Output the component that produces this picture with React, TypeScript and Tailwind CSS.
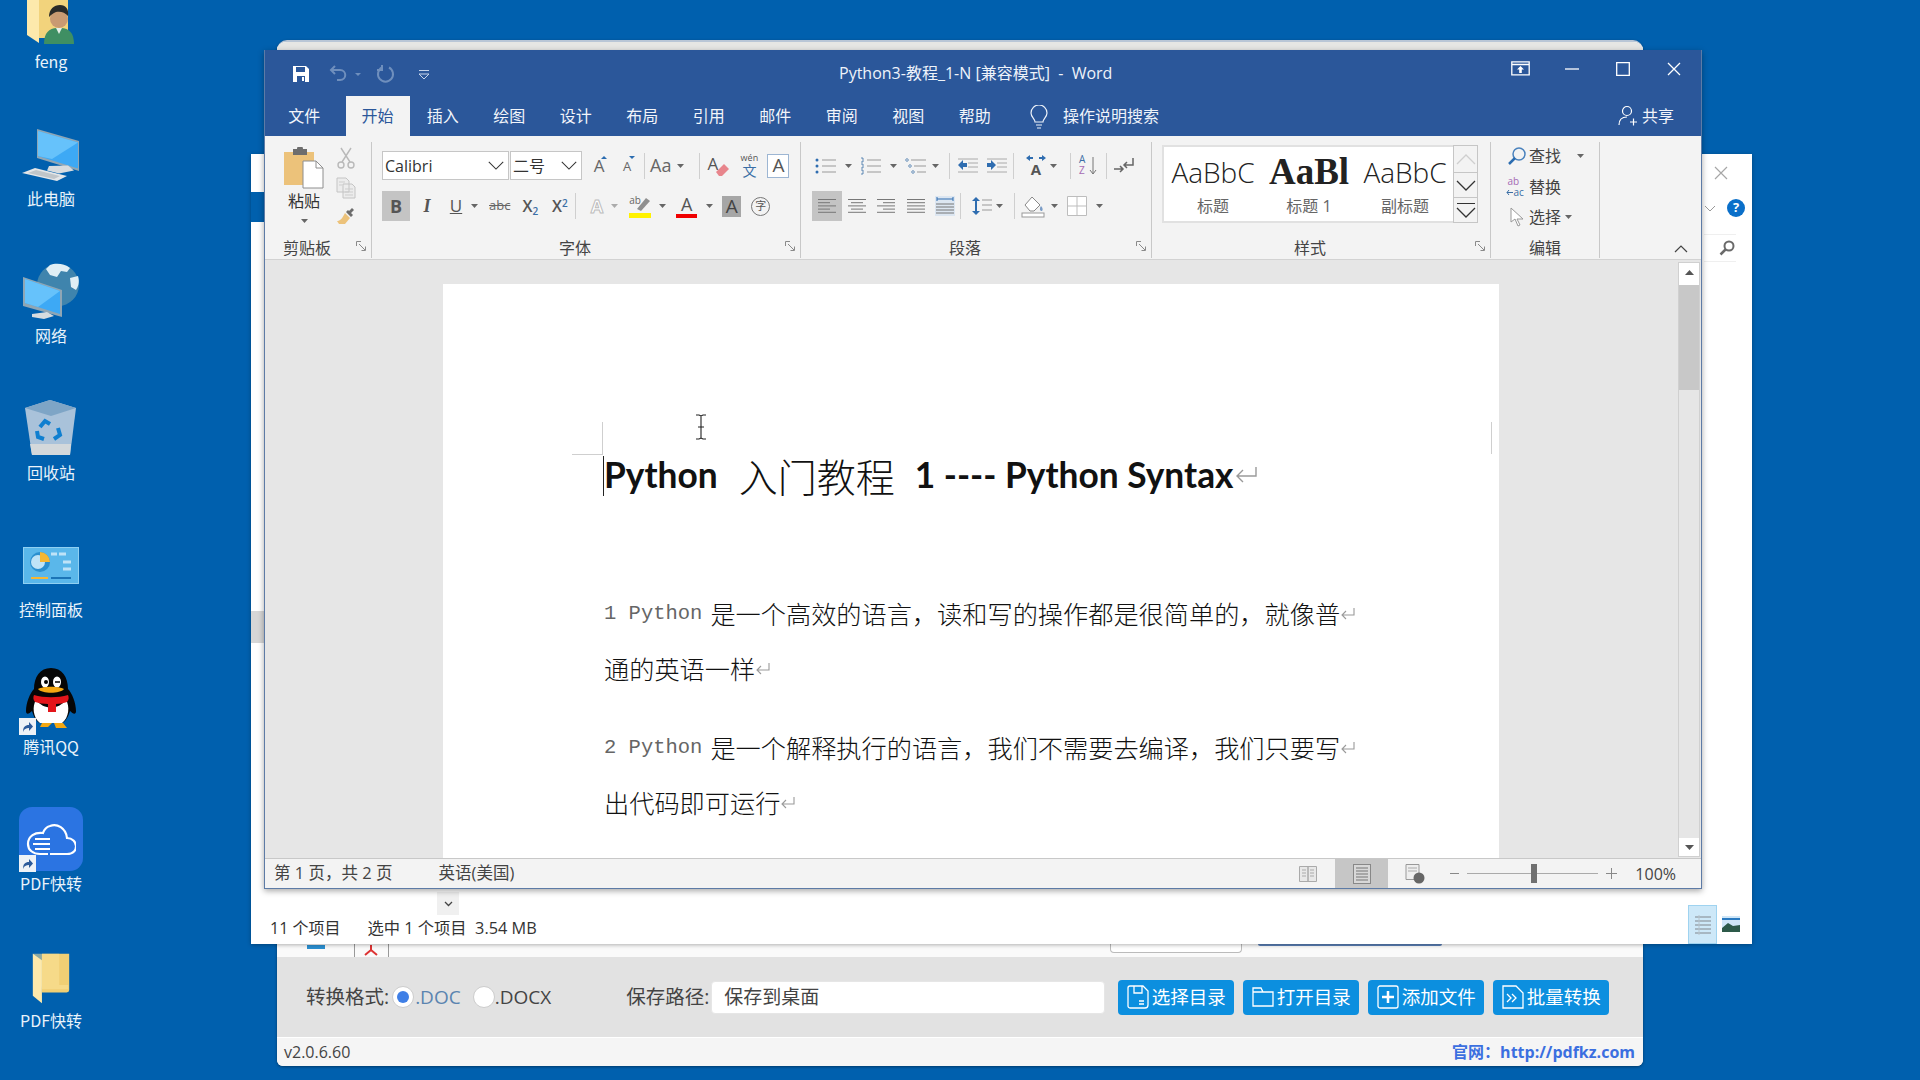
import type { ReactNode } from 'react'

// ─── Small shared pieces ──────────────────────────────────────────────────────

const Caret = ({ className = '' }: { className?: string }) => (
  <svg width="7" height="4" viewBox="0 0 7 4" className={`shrink-0 ${className}`}>
    <path d="M0 0h7L3.5 4z" fill="#666" />
  </svg>
)

const Launcher = () => (
  <svg width="11" height="11" viewBox="0 0 11 11" className="absolute right-[4px] top-[3px]">
    <path d="M.5 5V.5H5M3 3l6 6M9.5 5.5v4h-4" fill="none" stroke="#8a8a8a" />
  </svg>
)

const Chevron = ({ w = 20, h = 11 }: { w?: number; h?: number }) => (
  <svg width={w} height={h} viewBox="0 0 20 11">
    <path d="M1 1l9 9 9-9" fill="none" stroke="#333" strokeWidth="1.3" />
  </svg>
)

const Mark = ({ className = '' }: { className?: string }) => (
  <svg width="24" height="20" viewBox="0 0 24 20" className={`inline-block ${className}`}>
    <path d="M22 2v9H3M9 5l-6 6 6 6" fill="none" stroke="#9a9a9a" strokeWidth="1.4" />
  </svg>
)

const SmallMark = () => (
  <svg width="16" height="15" viewBox="0 0 16 15" className="inline-block">
    <path d="M14 2v7H2M6 5L2 9l4 4" fill="none" stroke="#9a9a9a" strokeWidth="1.1" />
  </svg>
)

const Lines = ({ kind }: { kind: 'left' | 'center' | 'right' | 'justify' }) => {
  const rows = [
    [1, 19],
    [kind === 'justify' ? 1 : kind === 'left' ? 1 : kind === 'center' ? 4 : 7, kind === 'justify' ? 19 : kind === 'left' ? 13 : kind === 'center' ? 16 : 19],
    [1, 19],
    [kind === 'justify' ? 1 : kind === 'left' ? 1 : kind === 'center' ? 4 : 7, kind === 'justify' ? 19 : kind === 'left' ? 13 : kind === 'center' ? 16 : 19],
    [1, 19],
  ]
  return (
    <svg width="20" height="18" viewBox="0 0 20 18">
      {rows.map(([a, b], i) => (
        <path key={i} d={`M${a} ${2.5 + i * 3.2}H${b}`} stroke="#777" strokeWidth="1" />
      ))}
    </svg>
  )
}

const Sep = ({ className = '' }: { className?: string }) => (
  <div className={`h-[26px] w-px shrink-0 bg-[#cfcfcf] ${className}`} />
)

// ─── Desktop icons ────────────────────────────────────────────────────────────

const Shortcut = () => (
  <div className="absolute bottom-[-1px] left-[1px] flex h-[17px] w-[17px] items-center justify-center bg-[#eef2f7]">
    <svg width="13" height="13" viewBox="0 0 13 13">
      <path d="M2 12c0-5 2-7 6-7V2l4 4.500L8 11V8C5 8 3 9 2 12z" fill="#2c5a9a" />
    </svg>
  </div>
)

const FolderIcon = () => (
  <svg width="38" height="55" viewBox="0 0 46 62">
    <path d="M12 1h33v44a3 3 0 01-3 3H12z" fill="#f0cf74" />
    <path d="M1 1h32v38h11v5H12z" fill="#fbe39a" opacity=".55" />
    <path d="M1 1l11 8v52L1 52z" fill="#fde9ac" />
  </svg>
)

const FengIcon = () => (
  <div className="relative h-[48px] w-[48px]">
    <svg width="50" height="48" viewBox="0 0 50 48" className="absolute left-[0px] top-0">
      <path d="M8 0h33v40H8z" fill="#f2d37c" />
      <path d="M0 0l12 0v45L0 37z" fill="#fde9ac" />
      <path d="M17 46c0-11 5-16 13-16h4c8 0 13 5 13 16z" fill="#3f8f63" />
      <path d="M29 30l3 6 3-6z" fill="#e6efe8" />
      <circle cx="32" cy="21" r="9" fill="#c99a72" />
      <path d="M22 19c0-8 5-12 11-12s9 4 8 11c-3-4-8-5-12-4-3 1-5 3-7 5z" fill="#2a2a28" />
    </svg>
  </div>
)

const PcIcon = () => (
  <svg width="58" height="52" viewBox="0 0 58 52">
    <path d="M15 0l42 12v30L15 29z" fill="#8fa6b5" />
    <path d="M16 2l40 11.500v26L16 27z" fill="#3da9f5" />
    <path d="M16 2l40 11.500L30 30 16 27z" fill="#66c2fb" />
    <path d="M27 37l19-.5 6 5-15 3-12-3z" fill="#d7dcdf" />
    <path d="M0 44l13-5 32 8-10 5z" fill="#e3e6e8" />
    <path d="M6 44l8-3 24 6-6 3z" fill="#bfc5c9" />
  </svg>
)

const NetIcon = () => (
  <svg width="58" height="56" viewBox="0 0 58 56">
    <circle cx="36" cy="22" r="21" fill="#3f84ad" />
    <path d="M28 2c5-2 14-2 20 3l-3 4-6-1-4 6-7-2-4-6zM48 15l8-2c2 6 0 11-2 14l-5-3z" fill="#dfeef5" />
    <path d="M1 14l39 13v27L1 43z" fill="#8fa6b5" />
    <path d="M3 16l35 12v23L3 40z" fill="#3da9f5" />
    <path d="M3 16l35 12-22 16L3 40z" fill="#66c2fb" />
    <path d="M10 51l15-2 7 4-10 3-12-2z" fill="#d7dcdf" />
  </svg>
)

const BinIcon = () => (
  <svg width="52" height="56" viewBox="0 0 52 56">
    <path d="M0 8l25-8 26 8-6 47H7z" fill="#a9c2da" />
    <path d="M0 8l25-8 26 8-25 8z" fill="#7ea5c6" />
    <path d="M5 44h41l-1 11H7z" fill="#d3d8db" />
    <path d="M15 27l5-6 5 3M33 28l2 7-6 4M19 39l-6-2-1-6" fill="none" stroke="#0f7fd0" strokeWidth="4" />
  </svg>
)

const PanelIcon = () => (
  <svg width="56" height="37" viewBox="0 0 56 37">
    <rect width="56" height="37" fill="#5ab7ea" />
    <rect x=".5" y=".5" width="55" height="36" fill="none" stroke="#8fd0f2" />
    <circle cx="17" cy="15" r="10" fill="#2b8fcf" />
    <circle cx="15" cy="15" r="7" fill="#bfe3f7" />
    <path d="M17 15V5a10 10 0 0110 10z" fill="#f7b733" />
    <path d="M28 7h6M36 7h7M40 15h8M40 22h8" stroke="#bfe3f7" strokeWidth="3" />
    <path d="M8 31h17" stroke="#f7b733" strokeWidth="2" />
    <path d="M28 31h20" stroke="#1b74b6" strokeWidth="2" />
  </svg>
)

const QqIcon = () => (
  <svg width="54" height="62" viewBox="0 0 54 62">
    <path d="M27 0c11 0 17 9 17 21 4 4 8 14 8 22 0 4-3 3-6 0-2 6-4 10-8 12H16c-4-2-6-6-8-12-3 3-6 4-6 0 0-8 4-18 8-22C10 9 16 0 27 0z" fill="#060606" />
    <path d="M12 32c8 10 22 10 30 0 4 6 3 18-4 23H16c-7-5-8-17-4-23z" fill="#fff" />
    <path d="M10 27c10 3 24 3 34 0 1 2 1 5-1 7-3 1-8 2-11 2v8h-8v-8c-5 0-9-1-13-2-2-2-2-5-1-7z" fill="#e3151a" />
    <ellipse cx="21" cy="14" rx="4" ry="5.500" fill="#fff" />
    <ellipse cx="33" cy="14" rx="4" ry="5.500" fill="#fff" />
    <circle cx="22" cy="14" r="2" fill="#000" />
    <path d="M31 14h5" stroke="#000" strokeWidth="1.500" />
    <path d="M14 21c5-3 21-3 26 0-4 5-22 5-26 0z" fill="#f3a712" />
    <path d="M18 55h10l-4 4h-8zM30 55h9l4 5H32z" fill="#f3a712" />
  </svg>
)

const PdfIcon = () => (
  <div className="flex h-[64px] w-[64px] items-center justify-center rounded-[13px] bg-[#2b74e2]">
    <svg width="50" height="34" viewBox="0 0 50 34" className="mt-[1px]">
      <path d="M24 31h17c13 0 11-16 0-16C40 5 31 0 24 3c-4 1-6 4-7 7-8-1-15 3-15 11 0 6 5 10 12 10h8" fill="none" stroke="#fff" strokeWidth="2.200" />
      <path d="M9 16h15M7 21h17M9 26h15" stroke="#fff" strokeWidth="2" />
    </svg>
  </div>
)

const DesktopIcon = ({ label, icon, lift = '', shortcut = false }: { label: string; icon: ReactNode; lift?: string; shortcut?: boolean }) => (
  <div className="flex h-[137px] w-[102px] flex-col items-center justify-end pb-[8px]">
    <div className="relative flex w-[66px] justify-center">
      <div className={lift}>{icon}</div>
      {shortcut && <Shortcut />}
    </div>
    <div className="mt-[1px] text-[16px] leading-[22px] text-[#e9f3fb] [font-family:'Noto_Sans_CJK_SC',sans-serif]">{label}</div>
  </div>
)

// ─── Word ─────────────────────────────────────────────────────────────────────

const tabs = ['文件', '开始', '插入', '绘图', '设计', '布局', '引用', '邮件', '审阅', '视图', '帮助']

const TitleBar = () => (
  <div className="relative h-[46px] shrink-0">
    <div className="absolute left-[27px] top-[14px] flex items-center">
      <svg width="18" height="18" viewBox="0 0 18 18">
        <path d="M1 1h13l3 3v13H1z" fill="#fff" />
        <path d="M4 2h9v5H4z" fill="#2b579a" />
        <path d="M5 11h8v6H5z" fill="#2b579a" />
        <path d="M10 12h2v4h-2z" fill="#fff" />
      </svg>
      <svg width="20" height="18" viewBox="0 0 20 18" className="ml-[19px]">
        <path d="M6 1L2 5l4 4M2 5h9c7 0 7 10 0 10H8" fill="none" stroke="#6f8fbd" strokeWidth="2" />
      </svg>
      <svg width="6" height="3" viewBox="0 0 6 3" className="ml-[6px]">
        <path d="M0 0h6L3 3z" fill="#6f8fbd" />
      </svg>
      <svg width="20" height="20" viewBox="0 0 20 20" className="ml-[14px]">
        <path d="M7 3.500a7.500 7.500 0 107 0M7 1v5H2" fill="none" stroke="#6f8fbd" strokeWidth="2" />
      </svg>
      <svg width="12" height="11" viewBox="0 0 12 11" className="ml-[23px]">
        <path d="M1 1.500h10" stroke="#c6d4ea" />
        <path d="M1 5h10L6 10z" fill="none" stroke="#c6d4ea" />
      </svg>
    </div>
    <div className="absolute left-[574px] top-[11px] whitespace-pre text-[16px] leading-[24px] text-[#eef3fa]">Python3-教程_1-N [兼容模式]  -  Word</div>
    <div className="absolute left-[1246px] top-[11px] flex items-center">
      <svg width="19" height="15" viewBox="0 0 19 15">
        <path d="M.8.800h17.400v13H.8zM.8 3.500h17.400" fill="none" stroke="#fff" strokeWidth="1.300" />
        <path d="M9.500 5L6 8.500h2.200V12h2.600V8.500H13z" fill="#fff" />
      </svg>
      <svg width="14" height="2" viewBox="0 0 14 2" className="ml-[35px]">
        <path d="M0 1h14" stroke="#fff" strokeWidth="1.300" />
      </svg>
      <svg width="14" height="14" viewBox="0 0 14 14" className="ml-[37px]">
        <path d="M.7.700h12.600v12.600H.7z" fill="none" stroke="#fff" strokeWidth="1.300" />
      </svg>
      <svg width="14" height="14" viewBox="0 0 14 14" className="ml-[37px]">
        <path d="M1 1l12 12M13 1L1 13" stroke="#fff" strokeWidth="1.300" />
      </svg>
    </div>
  </div>
)

const TabRow = () => (
  <div className="relative flex h-[40px] shrink-0 items-end pl-[6px]">
    {tabs.map((t) => (
      <div
        key={t}
        className={
          t === '开始'
            ? 'ml-[8px] flex h-[40px] w-[64px] items-center justify-center bg-[#f3f3f3] text-[16px] text-[#2b579a]'
            : 'flex h-[40px] w-[66.500px] items-center justify-center text-[16px] text-[#f2f5fa]'
        }
      >
        {t}
      </div>
    ))}
    <svg width="18" height="24" viewBox="0 0 18 24" className="mb-[7px] ml-[22px]">
      <path d="M5 17c0-3-4-5-4-9a8 8 0 0116 0c0 4-4 6-4 9zM6 20h6M7 23h4" fill="none" stroke="#eef3fa" strokeWidth="1.200" />
    </svg>
    <div className="ml-[15px] flex h-[40px] items-center text-[16px] text-[#eef3fa]">操作说明搜索</div>
    <div className="absolute right-[27px] top-0 flex h-[40px] items-center">
      <svg width="20" height="22" viewBox="0 0 20 22">
        <circle cx="9" cy="6" r="4.500" fill="none" stroke="#fff" strokeWidth="1.200" />
        <path d="M1 20c0-5 3-8 8-8M12 17h7M15.500 13.500v7" fill="none" stroke="#fff" strokeWidth="1.200" />
      </svg>
      <span className="ml-[4px] text-[16px] text-[#f2f5fa]">共享</span>
    </div>
  </div>
)

const Group = ({ label, className, launcher = true, children }: { label: string; className: string; launcher?: boolean; children: ReactNode }) => (
  <div className={`flex h-full shrink-0 flex-col border-r border-[#c8c8c8] ${className}`}>
    <div className="min-h-0 flex-1">{children}</div>
    <div className={launcher ? 'relative h-[20px] pr-[22px] text-center text-[16px] leading-[20px] text-[#444]' : 'relative h-[20px] text-center text-[16px] leading-[20px] text-[#444]'}>
      {label}
      {launcher && <Launcher />}
    </div>
  </div>
)

const ClipboardGroup = () => (
  <Group label="剪贴板" className="w-[107px]">
    <div className="flex pt-[5px]">
      <div className="ml-[19px] flex w-[40px] flex-col items-center">
        <svg width="40" height="42" viewBox="0 0 40 42">
          <path d="M0 5h30v33H0z" fill="#ecc27a" />
          <path d="M9 2h4a3 3 0 016 0h4v6H9z" fill="#6d6d6d" />
          <path d="M19 14h13l7 7v20H19z" fill="#fff" stroke="#8e8e8e" />
          <path d="M32 14v7h7" fill="none" stroke="#8e8e8e" />
        </svg>
        <div className="text-[16px] leading-[24px] text-[#333]">粘贴</div>
        <Caret className="mt-[6px]" />
      </div>
      <div className="ml-[12px] flex flex-col items-center">
        <svg width="18" height="22" viewBox="0 0 18 22">
          <path d="M4 1l9 14M14 1L5 15" stroke="#b9b9b9" strokeWidth="1.400" />
          <circle cx="4" cy="18" r="3" fill="none" stroke="#b9b9b9" strokeWidth="1.400" />
          <circle cx="14" cy="18" r="3" fill="none" stroke="#b9b9b9" strokeWidth="1.400" />
        </svg>
        <svg width="20" height="22" viewBox="0 0 20 22" className="mt-[8px]">
          <path d="M1 1h9l3 3v11H1zM7 7h9l3 3v11H7z" fill="#ececec" stroke="#c4c4c4" />
          <path d="M3 5h6M3 8h3M9 12h8M9 15h8M9 18h8" stroke="#cdcdcd" />
        </svg>
        <svg width="18" height="16" viewBox="0 0 18 16" className="mt-[9px]">
          <path d="M8 5l5 5-5 6H2L0 13c3 0 5-2 8-8z" fill="#ecc27a" />
          <path d="M9 4l5 5 2-2-2-2 3-3-2-2-3 3-1-1z" fill="#6d6d6d" />
        </svg>
      </div>
    </div>
  </Group>
)

const Combo = ({ text, className }: { text: string; className: string }) => (
  <div className={`flex h-[29px] items-center justify-between border border-[#c6c6c6] bg-white pl-[2px] pr-[4px] text-[16px] text-[#333] ${className}`}>
    <span>{text}</span>
    <Chevron w={16} h={9} />
  </div>
)

const GrowShrink = ({ size, up }: { size: string; up: boolean }) => (
  <div className={`relative flex w-[28px] justify-center text-[#666] ${size}`}>
    A
    <svg width="6" height="3" viewBox="0 0 6 3" className="absolute right-[6px] top-[4px]">
      <path d={up ? 'M0 3h6L3 0z' : 'M0 0h6L3 3z'} fill="#2b6cb0" />
    </svg>
  </div>
)

const FontGroup = () => (
  <Group label="字体" className="w-[429px]">
    <div className="flex flex-col gap-[11px] pl-[10px] pt-[9px]">
      <div className="flex h-[29px] items-center">
        <Combo text="Calibri" className="w-[127px]" />
        <Combo text="二号" className="ml-[1px] w-[72px]" />
        <div className="ml-[3px] flex items-center leading-[28px]">
          <GrowShrink size="text-[17px]" up />
          <GrowShrink size="text-[13px]" up={false} />
        </div>
        <Sep className="ml-[3px]" />
        <span className="ml-[5px] text-[18px] text-[#666]">Aa</span>
        <Caret className="ml-[6px]" />
        <Sep className="ml-[15px]" />
        <div className="relative ml-[7px] h-[24px] w-[22px] text-[17px] leading-[20px] text-[#555]">
          A
          <svg width="14" height="13" viewBox="0 0 14 13" className="absolute bottom-[2px] right-0">
            <path d="M1 9l8-8 5 5-7 7H4z" fill="#e8858c" />
          </svg>
        </div>
        <div className="ml-[8px] flex w-[24px] flex-col items-center text-[#555]">
          <span className="text-[9px] leading-[10px]">wén</span>
          <span className="text-[14px] leading-[15px] text-[#3a6ea5] [font-family:'Noto_Sans_CJK_SC',sans-serif]">文</span>
        </div>
        <div className="ml-[6px] flex h-[24px] w-[22px] items-center justify-center border border-[#9db6d3] bg-white text-[19px] text-[#555]">A</div>
      </div>
      <div className="flex h-[30px] items-center">
        <div className="flex h-[30px] w-[28px] items-center justify-center bg-[#c4c4c4] text-[18px] font-bold text-[#555]">B</div>
        <div className="ml-[2px] flex w-[30px] justify-center text-[18px] font-bold italic text-[#555] [font-family:'Liberation_Serif',serif]">I</div>
        <div className="flex w-[28px] justify-center text-[17px] text-[#555] underline">U</div>
        <Caret className="ml-[1px]" />
        <span className="ml-[11px] text-[13px] text-[#666] line-through">abc</span>
        <span className="ml-[12px] text-[16px] font-semibold text-[#555]">X<sub className="text-[10px] text-[#3a6ea5]">2</sub></span>
        <span className="ml-[14px] text-[16px] font-semibold text-[#555]">X<sup className="text-[10px] text-[#3a6ea5]">2</sup></span>
        <Sep className="ml-[7px]" />
        <span className="ml-[15px] text-[18px] font-bold text-white [-webkit-text-stroke:1px_#bdbdbd]">A</span>
        <Caret className="ml-[8px] opacity-50" />
        <div className="relative ml-[11px] h-[24px] w-[22px] text-[10px] leading-[12px] text-[#666]">
          ab
          <svg width="22" height="24" viewBox="0 0 22 24" className="absolute left-0 top-0">
            <path d="M8 15l9-11 4 3-9 10z" fill="#8f8f8f" />
            <rect y="19" width="22" height="5" fill="#fff200" />
          </svg>
        </div>
        <Caret className="ml-[8px]" />
        <div className="ml-[10px] flex w-[21px] flex-col items-center">
          <span className="text-[18px] leading-[20px] text-[#555]">A</span>
          <div className="h-[4px] w-[21px] bg-[#f00000]" />
        </div>
        <Caret className="ml-[9px]" />
        <div className="ml-[9px] flex h-[21px] w-[19px] items-center justify-center bg-[#a6a6a6] text-[19px] text-[#444]">A</div>
        <div className="ml-[10px] flex h-[19px] w-[19px] items-center justify-center rounded-full border border-[#777] text-[11px] text-[#555]">字</div>
      </div>
    </div>
  </Group>
)

const ListIcon = ({ n }: { n: 'bullet' | 'num' | 'multi' }) => (
  <svg width="22" height="18" viewBox="0 0 22 18">
    {[3, 9, 15].map((y, i) => (
      <g key={y}>
        {n === 'bullet' && <circle cx="2" cy={y} r="1.500" fill="#2f6db0" />}
        {n === 'num' && <path d={`M1 ${y - 2}h2v4H1`} fill="none" stroke="#3a6ea5" strokeWidth=".8" />}
        {n === 'multi' && <circle cx={2 + i * 3} cy={y} r="1.300" fill="none" stroke="#3a6ea5" strokeWidth=".7" />}
        <path d={`M${n === 'multi' ? 6 + i * 3 : 7} ${y}H21`} stroke="#999" />
      </g>
    ))}
  </svg>
)

const IndentIcon = ({ dir }: { dir: 'in' | 'out' }) => (
  <svg width="20" height="16" viewBox="0 0 20 16">
    <path d="M0 1h20M10 5h10M10 9h10M0 14h20" stroke="#aaa" />
    <path d={dir === 'out' ? 'M0 7l5-5v3h4v4H5v3z' : 'M9 7L4 2v3H0v4h4v3z'} fill="#2f6db0" />
  </svg>
)

const ParagraphGroup = () => (
  <Group label="段落" className="w-[351px]">
    <div className="flex flex-col gap-[11px] pl-[14px] pt-[9px]">
      <div className="flex h-[29px] items-center">
        <ListIcon n="bullet" />
        <Caret className="ml-[8px]" />
        <div className="ml-[8px]"><ListIcon n="num" /></div>
        <Caret className="ml-[8px]" />
        <div className="ml-[8px]"><ListIcon n="multi" /></div>
        <Caret className="ml-[5px]" />
        <Sep className="ml-[10px]" />
        <div className="ml-[8px]"><IndentIcon dir="out" /></div>
        <div className="ml-[9px]"><IndentIcon dir="in" /></div>
        <Sep className="ml-[6px]" />
        <div className="relative ml-[11px] flex h-[24px] w-[22px] items-end justify-center text-[15px] font-bold leading-[17px] text-[#555]">
          A
          <svg width="22" height="8" viewBox="0 0 22 8" className="absolute left-0 top-0">
            <path d="M1 4l4-3v2h3v2H5v2zM21 4l-4-3v2h-3v2h3v2z" fill="#2f6db0" />
          </svg>
        </div>
        <Caret className="ml-[3px]" />
        <Sep className="ml-[13px]" />
        <div className="relative ml-[8px] flex h-[24px] w-[18px] flex-col text-[10px] leading-[11px]">
          <span className="text-[#3a6ea5]">A</span>
          <span className="text-[#a56bb3]">Z</span>
          <svg width="8" height="20" viewBox="0 0 8 20" className="absolute right-0 top-[2px]">
            <path d="M4 1v17M1 14l3 4 3-4" fill="none" stroke="#777" />
          </svg>
        </div>
        <Sep className="ml-[9px]" />
        <svg width="22" height="18" viewBox="0 0 22 18" className="ml-[6px]">
          <path d="M20 1v7h-9M14 5l-3 3 3 3" fill="none" stroke="#666" strokeWidth="1.500" />
          <path d="M1 12h9M7 9l3 3-3 3" fill="none" stroke="#666" strokeWidth="1.500" />
        </svg>
      </div>
      <div className="-ml-[3px] flex h-[30px] items-center">
        <div className="flex h-[30px] w-[30px] items-center justify-center bg-[#c4c4c4]"><Lines kind="left" /></div>
        <div className="ml-[5px]"><Lines kind="center" /></div>
        <div className="ml-[9px]"><Lines kind="right" /></div>
        <div className="ml-[10px]"><Lines kind="justify" /></div>
        <svg width="20" height="20" viewBox="0 0 20 20" className="ml-[9px]">
          <rect width="20" height="20" fill="#dce6f1" />
          <path d="M2 3h16M2 1v4M18 1v4" stroke="#2f6db0" />
          <path d="M1 8h18M1 11h18M1 14h18M1 17h18" stroke="#777" />
        </svg>
        <Sep className="ml-[5px]" />
        <svg width="20" height="20" viewBox="0 0 20 20" className="ml-[11px]">
          <path d="M4 1L0 5h3v10H0l4 4 4-4H5V5h3z" fill="#2f6db0" />
          <path d="M10 4h10M10 9h10M10 14h10" stroke="#999" />
        </svg>
        <Caret className="ml-[4px]" />
        <Sep className="ml-[11px]" />
        <svg width="24" height="24" viewBox="0 0 24 24" className="ml-[6px]">
          <path d="M4 11l7-8 8 8-6 6H9z" fill="#fff" stroke="#888" />
          <path d="M20 12c2 2 2 4 1 5-2 0-3-2-1-5z" fill="#7a9cc6" />
          <rect x="1" y="19" width="22" height="4" fill="#fff" stroke="#999" />
        </svg>
        <Caret className="ml-[6px]" />
        <svg width="20" height="20" viewBox="0 0 20 20" className="ml-[9px]">
          <path d="M.5.500h19v19H.5zM10 .5v19M.5 10h19" fill="#fff" stroke="#bdbdbd" />
        </svg>
        <Caret className="ml-[9px]" />
      </div>
    </div>
  </Group>
)

const StyleItem = ({ sample, name, className }: { sample: string; name: string; className: string }) => (
  <div className="flex w-[96px] flex-col items-center overflow-hidden">
    <div className={`h-[40px] whitespace-nowrap leading-[40px] text-[#222] ${className}`}>{sample}</div>
    <div className="mt-[4px] text-[16px] leading-[20px] text-[#666]">{name}</div>
  </div>
)

const StylesGroup = () => (
  <Group label="样式" className="w-[339px]">
    <div className="ml-[10px] mt-[3px] flex h-[78px] w-[316px]">
      <div className="flex flex-1 items-start border-2 border-r-0 border-[#e1e1e1] bg-white pl-[1px] pt-[5px]">
        <StyleItem sample="AaBbC" name="标题" className="text-[28px] font-light" />
        <StyleItem sample="AaBl" name="标题 1" className="text-[37px] font-bold [font-family:'Liberation_Serif',serif]" />
        <StyleItem sample="AaBbC" name="副标题" className="text-[28px] font-light" />
      </div>
      <div className="flex w-[26px] flex-col">
        <div className="flex h-[28px] items-center justify-center border border-[#c6c6c6]">
          <svg width="20" height="11" viewBox="0 0 20 11"><path d="M1 10l9-9 9 9" fill="none" stroke="#cfcfcf" strokeWidth="1.300" /></svg>
        </div>
        <div className="flex h-[25px] items-center justify-center border border-t-0 border-[#c6c6c6]"><Chevron /></div>
        <div className="flex h-[25px] flex-col items-center justify-center gap-[3px] border border-t-0 border-[#c6c6c6]">
          <div className="h-px w-[18px] bg-[#333]" />
          <Chevron />
        </div>
      </div>
    </div>
  </Group>
)

const EditRow = ({ icon, text, caret, gap }: { icon: ReactNode; text: string; caret?: boolean; gap: string }) => (
  <div className="flex h-[30.500px] items-center text-[16px] text-[#444]">
    <div className="flex w-[23px] justify-center">{icon}</div>
    <span className="ml-[1px]">{text}</span>
    {caret && <Caret className={gap} />}
  </div>
)

const EditGroup = () => (
  <Group label="编辑" className="w-[109px]" launcher={false}>
    <div className="-mt-[1px] flex flex-col pl-[14px]">
      <EditRow
        text="查找"
        caret
        gap="ml-[16px]"
        icon={
          <svg width="20" height="20" viewBox="0 0 20 20">
            <circle cx="12" cy="8" r="6" fill="none" stroke="#4a82bd" strokeWidth="1.500" />
            <path d="M8 12l-6 6" stroke="#2b6cb0" strokeWidth="2.500" />
          </svg>
        }
      />
      <EditRow
        text="替换"
        gap=""
        icon={
          <div className="relative h-[22px] w-[22px] text-[10px] leading-[11px]">
            <div className="pl-[2px] text-[#a56bb3]">ab</div>
            <div className="pl-[8px] text-[#3a6ea5]">ac</div>
            <svg width="7" height="7" viewBox="0 0 7 7" className="absolute bottom-[2px] left-0">
              <path d="M1 3.500h6M3 1L1 3.500 3 6" fill="none" stroke="#3a6ea5" />
            </svg>
          </div>
        }
      />
      <EditRow
        text="选择"
        caret
        gap="ml-[4px]"
        icon={
          <svg width="14" height="20" viewBox="0 0 14 20">
            <path d="M1 1v14l4-3 3 7 2-1-3-6h6z" fill="#fff" stroke="#999" />
          </svg>
        }
      />
    </div>
  </Group>
)

const Ribbon = () => (
  <div className="relative flex h-[124px] shrink-0 border-b border-[#d2d2d2] bg-[#f3f3f3] pb-[1px] pt-[6px]">
    <ClipboardGroup />
    <FontGroup />
    <ParagraphGroup />
    <StylesGroup />
    <EditGroup />
    <svg width="14" height="8" viewBox="0 0 14 8" className="absolute bottom-[6px] right-[13px]">
      <path d="M1 7l6-6 6 6" fill="none" stroke="#444" strokeWidth="1.200" />
    </svg>
  </div>
)

const Page = () => (
  <div className="relative ml-[178px] mt-[24px] h-[700px] w-[1056px] shrink-0 bg-white pl-[161px] pt-[166px] text-[#111]">
    {/* margin corners and mouse cursor sit over the page */}
    <div className="absolute left-[159px] top-[138px] h-[33px] w-px bg-[#cfcfcf]" />
    <div className="absolute left-[129px] top-[170px] h-px w-[30px] bg-[#cfcfcf]" />
    <div className="absolute left-[1048px] top-[138px] h-[32px] w-px bg-[#cfcfcf]" />
    <div className="absolute left-[160px] top-[172px] h-[40px] w-px bg-[#222]" />
    <svg width="14" height="26" viewBox="0 0 14 26" className="absolute left-[251px] top-[130px]">
      <path d="M2 1h3l2 1 2-1h3M7 2v22M2 25h3l2-1 2 1h3M4 13h6" fill="none" stroke="#222" strokeWidth="1.100" />
    </svg>

    <div className="flex h-[50px] items-center whitespace-pre">
      <span className="text-[35.300px] font-bold [font-family:Lato,'Noto_Sans_CJK_SC',sans-serif]">Python</span>
      <span className="ml-[21px] text-[39px] font-light [font-family:'Noto_Sans_CJK_SC',sans-serif]">入门教程</span>
      <span className="ml-[20px] text-[35.300px] font-bold [font-family:Lato,'Noto_Sans_CJK_SC',sans-serif]">1 ---- Python Syntax</span>
      <Mark />
    </div>

    <div className="mt-[86px] text-[25.200px] font-light leading-[55px] [font-family:'Noto_Sans_CJK_SC',sans-serif]">
      <div className="flex h-[55px] items-center whitespace-pre">
        <span className="text-[20.500px] text-[#666] [font-family:'Liberation_Mono',monospace]">1 Python</span>
        <span className="ml-[8px]">是一个高效的语言，读和写的操作都是很简单的，就像普</span>
        <SmallMark />
      </div>
      <div className="flex h-[55px] items-center whitespace-pre">
        <span>通的英语一样</span>
        <SmallMark />
      </div>
      <div className="mt-[24px] flex h-[55px] items-center whitespace-pre">
        <span className="text-[20.500px] text-[#666] [font-family:'Liberation_Mono',monospace]">2 Python</span>
        <span className="ml-[8px]">是一个解释执行的语言，我们不需要去编译，我们只要写</span>
        <SmallMark />
      </div>
      <div className="flex h-[55px] items-center whitespace-pre">
        <span>出代码即可运行</span>
        <SmallMark />
      </div>
    </div>
  </div>
)

const Scrollbar = () => (
  <div className="absolute right-[1px] top-[2px] flex h-[595px] w-[22px] flex-col border border-[#d0d0d0] bg-[#fff]">
    <div className="flex h-[18px] items-center justify-center">
      <svg width="9" height="5" viewBox="0 0 9 5"><path d="M0 5h9L4.500 0z" fill="#555" /></svg>
    </div>
    <div className="mt-[4px] h-[105px] bg-[#c8c8c8]" />
    <div className="flex-1 bg-[#e6e6e6]" />
    <div className="flex h-[18px] items-center justify-center">
      <svg width="9" height="5" viewBox="0 0 9 5"><path d="M0 0h9L4.500 5z" fill="#555" /></svg>
    </div>
  </div>
)

const StatusBar = () => (
  <div className="flex h-[30px] shrink-0 items-center border-t border-[#c8c8c8] bg-[#f3f3f3] text-[16.500px] text-[#444]">
    <span className="ml-[9px]">第 1 页，共 2 页</span>
    <span className="ml-[46px]">英语(美国)</span>
    <div className="ml-auto flex h-full items-center">
      <svg width="18" height="18" viewBox="0 0 18 18">
        <path d="M.5 1.500h8.500v15H.5zM9 1.500h8.500v15H9z" fill="#e8e8e8" stroke="#aaa" />
        <path d="M3 5h4M3 8h4M3 11h4M11 5h4M11 8h4M11 11h4" stroke="#aaa" />
      </svg>
      <div className="ml-[18px] flex h-full w-[53px] items-center justify-center bg-[#c6c6c6]">
        <svg width="18" height="20" viewBox="0 0 18 20">
          <rect x=".5" y=".5" width="17" height="19" fill="#d8d8d8" stroke="#888" />
          <path d="M3 4h12M3 7h12M3 10h12M3 13h12M3 16h12" stroke="#777" />
        </svg>
      </div>
      <svg width="20" height="20" viewBox="0 0 20 20" className="ml-[17px]">
        <path d="M1 .5h13v15H1z" fill="#eee" stroke="#999" />
        <path d="M3 4h9M3 7h9" stroke="#aaa" />
        <circle cx="14" cy="14" r="5.500" fill="#666" />
      </svg>
      <div className="ml-[25px] h-px w-[9px] bg-[#888]" />
      <div className="relative ml-[8px] h-px w-[131px] bg-[#aaa]">
        <div className="absolute left-[64px] top-[-9px] h-[19px] w-[6px] bg-[#707070]" />
      </div>
      <svg width="11" height="11" viewBox="0 0 11 11" className="ml-[8px]">
        <path d="M0 5.500h11M5.500 0v11" stroke="#888" />
      </svg>
      <span className="ml-[18px] mr-[25px] text-[16px]">100%</span>
    </div>
  </div>
)

const WordWindow = () => (
  <div className="absolute left-[264px] top-[50px] flex h-[839px] w-[1438px] flex-col border-x border-b border-[#5d7ba6] bg-[#2b579a] shadow-[0_2px_6px_rgba(0,0,0,0.35)] [font-family:'Open_Sans','Noto_Sans_CJK_SC',sans-serif]">
    <TitleBar />
    <TabRow />
    <Ribbon />
    <div className="relative min-h-0 flex-1 overflow-hidden bg-[#e6e6e6]">
      <Page />
      <Scrollbar />
    </div>
    <StatusBar />
  </div>
)

// ─── Windows behind Word ──────────────────────────────────────────────────────

const ExplorerWindow = () => (
  <div className="absolute left-[251px] top-[154px] flex h-[790px] w-[1501px] flex-col bg-white text-[16px] text-[#333] shadow-[0_1px_4px_rgba(0,0,0,0.3)] [font-family:'Open_Sans','Noto_Sans_CJK_SC',sans-serif]">
    <div className="h-[38px] bg-white" />
    <div className="h-[30px] bg-[#0060ad]" />
    <div className="h-[389px]" />
    <div className="h-[32px] w-[13px] bg-[#d6d6d6]" />
    <div className="flex-1" />
    <div className="relative flex h-[54px] shrink-0 items-end pb-[4px]">
      <div className="absolute left-[186px] top-[2px] flex h-[23px] w-[22px] items-center justify-center bg-[#f0f0f0]">
        <svg width="9" height="6" viewBox="0 0 9 6"><path d="M1 1l3.500 3.500L8 1" fill="none" stroke="#444" strokeWidth="1.300" /></svg>
      </div>
      <span className="ml-[19px]">11 个项目</span>
      <span className="ml-[27px] text-[16.300px]">选中 1 个项目&nbsp;&nbsp;3.54 MB</span>
      <div className="absolute bottom-0 right-[12px] flex items-end">
        <div className="flex h-[39px] w-[29px] items-center justify-center border border-[#9fd3f0] bg-[#cde8f8]">
          <svg width="18" height="22" viewBox="0 0 18 22">
            <path d="M1 3h16M1 7h16M1 11h16M1 15h16M1 19h16" stroke="#9aa7b0" strokeWidth="1.500" />
            <path d="M5 1v20" stroke="#b8c4cc" />
          </svg>
        </div>
        <svg width="18" height="16" viewBox="0 0 18 16" className="mb-[12px] ml-[5px]">
          <rect width="18" height="16" fill="#cfe6f7" />
          <path d="M0 3h18" stroke="#2a7ac0" strokeWidth="2" />
          <path d="M0 12l6-5 5 3 7-1v7H0z" fill="#2d5a4a" />
        </svg>
      </div>
    </div>
    {/* top right corner, the part that shows beside Word */}
    <div className="absolute left-[1451px] top-0 flex h-[110px] w-[50px] flex-col bg-white">
      <div className="flex h-[36px] items-center pl-[12px] pt-[2px]">
        <svg width="14" height="14" viewBox="0 0 14 14"><path d="M1 1l12 12M13 1L1 13" stroke="#a6a6a6" strokeWidth="1.200" /></svg>
      </div>
      <div className="flex h-[36px] items-center pl-[2px]">
        <svg width="12" height="7" viewBox="0 0 12 7"><path d="M1 1l5 5 5-5" fill="none" stroke="#999" /></svg>
        <div className="ml-[11px] flex h-[18px] w-[18px] items-center justify-center rounded-full bg-[#0a6fc9] text-[13px] font-bold text-white">?</div>
      </div>
      <div className="ml-[2px] mt-[8px] flex h-[28px] w-[32px] items-center justify-end border-y border-[#efefef] pr-[1px]">
        <svg width="16" height="16" viewBox="0 0 16 16">
          <circle cx="10" cy="6" r="4.500" fill="none" stroke="#6a6a6a" strokeWidth="2" />
          <path d="M6.500 9.500L1.500 14.500" stroke="#6a6a6a" strokeWidth="2.500" />
        </svg>
      </div>
    </div>
  </div>
)

const PdfButton = ({ label, icon }: { label: string; icon: ReactNode }) => (
  <div className="flex h-[35px] w-[116px] items-center justify-center rounded-[4px] bg-[#0c8fdf] text-[18.500px] text-white">
    {icon}
    <span className="ml-[3px]">{label}</span>
  </div>
)

const PdfWindow = () => (
  <div className="absolute left-[277px] top-[40px] flex h-[1026px] w-[1366px] flex-col overflow-hidden rounded-b-[6px] rounded-t-[10px] border-t-2 border-[#b9c6d6] bg-[#ededed] shadow-[0_1px_3px_rgba(0,0,0,0.4)] [font-family:'Open_Sans','Noto_Sans_CJK_SC',sans-serif]">
    <div className="relative h-[915px] shrink-0 bg-[#fafafa]">
      <div className="absolute inset-x-0 top-0 h-[10px] bg-[#e6e6e4]" />
      <div className="absolute bottom-[8px] left-[30px] h-[4px] w-[18px] bg-[#2b8fd0]" />
      <div className="absolute bottom-0 left-[77px] h-[13px] w-px bg-[#999]" />
      <div className="absolute bottom-0 left-[111px] h-[13px] w-px bg-[#999]" />
      <svg width="14" height="11" viewBox="0 0 14 11" className="absolute bottom-[1px] left-[87px]">
        <path d="M7 0v5M7 5L1 10M7 5l6 5" fill="none" stroke="#d33" strokeWidth="2" />
      </svg>
      <div className="absolute bottom-[4px] left-[833px] h-[9px] w-[132px] rounded-b-[4px] border border-t-0 border-[#bbb] bg-white" />
      <div className="absolute bottom-[11px] left-[981px] h-[2px] w-[184px] rounded-b-[4px] bg-[#5b7fb5]" />
    </div>
    <div className="flex h-[80px] shrink-0 items-center bg-[#e2e2e2] pl-[29px] text-[19.500px] text-[#444]">
      <span>转换格式:</span>
      <div className="ml-[3px] flex h-[22px] w-[22px] items-center justify-center rounded-full border border-[#ccc] bg-white">
        <div className="h-[12px] w-[12px] rounded-full bg-[#3f7fe6]" />
      </div>
      <span className="ml-[1px] text-[19px] text-[#5a84b0]">.DOC</span>
      <div className="ml-[12px] h-[22px] w-[22px] rounded-full border border-[#ccc] bg-white" />
      <span className="text-[19px] text-[#444]">.DOCX</span>
      <span className="ml-[75px]">保存路径:</span>
      <div className="ml-[2px] flex h-[33px] w-[394px] items-center rounded-[4px] border border-[#e6e6e6] bg-white pl-[12px] text-[19px] text-[#444]">保存到桌面</div>
      <div className="ml-[13px] flex gap-[9px]">
        <PdfButton
          label="选择目录"
          icon={
            <svg width="22" height="24" viewBox="0 0 22 24">
              <path d="M3 1h13l5 5v14a3 3 0 01-3 3H3a2 2 0 01-2-2V3a2 2 0 012-2zM7 1v7h8V1M12 16h5M12 19h5" fill="none" stroke="#fff" strokeWidth="1.300" />
            </svg>
          }
        />
        <PdfButton
          label="打开目录"
          icon={
            <svg width="22" height="20" viewBox="0 0 22 20">
              <path d="M1 1h8l2 4h10v14H1zM1 5h10" fill="none" stroke="#fff" strokeWidth="1.300" />
            </svg>
          }
        />
        <PdfButton
          label="添加文件"
          icon={
            <svg width="22" height="24" viewBox="0 0 22 24">
              <rect x="1" y="1" width="20" height="22" rx="2" fill="none" stroke="#fff" strokeWidth="1.300" />
              <path d="M11 6v12M5 12h12" stroke="#fff" strokeWidth="2.500" />
            </svg>
          }
        />
        <PdfButton
          label="批量转换"
          icon={
            <svg width="22" height="24" viewBox="0 0 22 24">
              <path d="M1 1h13l7 7v15H1zM5 9l4 4-4 4M10 9l4 4-4 4" fill="none" stroke="#fff" strokeWidth="1.300" />
            </svg>
          }
        />
      </div>
    </div>
    <div className="flex flex-1 items-center justify-between border-t border-white bg-[#f5f5f5] pl-[7px] pr-[8px]">
      <span className="text-[16px] text-[#444]">v2.0.6.60</span>
      <span className="text-[16px] font-bold text-[#3b6fe0]">
        <span className="font-semibold">官网：</span>http://pdfkz.com
      </span>
    </div>
  </div>
)

// ─── App ──────────────────────────────────────────────────────────────────────

const desktopItems = [
  { label: 'feng', icon: <FengIcon />, lift: 'mb-[3px]' },
  { label: '此电脑', icon: <PcIcon />, lift: 'mb-[5px]' },
  { label: '网络', icon: <NetIcon />, lift: 'mb-[4px]' },
  { label: '回收站', icon: <BinIcon />, lift: 'mb-[4px]' },
  { label: '控制面板', icon: <PanelIcon />, lift: 'mb-[13px]' },
  { label: '腾讯QQ', icon: <QqIcon />, lift: 'mb-[4px]', shortcut: true },
  { label: 'PDF快转', icon: <PdfIcon />, shortcut: true },
  { label: 'PDF快转', icon: <FolderIcon />, lift: 'mb-[2px]' },
]

export default function App() {
  return (
    <div className="relative h-[1080px] w-[1920px] overflow-hidden bg-[#0060ae]">
      <div className="absolute left-0 top-[-57px] flex flex-col">
        {desktopItems.map((item, i) => (
          <DesktopIcon key={i} {...item} />
        ))}
      </div>
      <PdfWindow />
      <ExplorerWindow />
      <WordWindow />
    </div>
  )
}
